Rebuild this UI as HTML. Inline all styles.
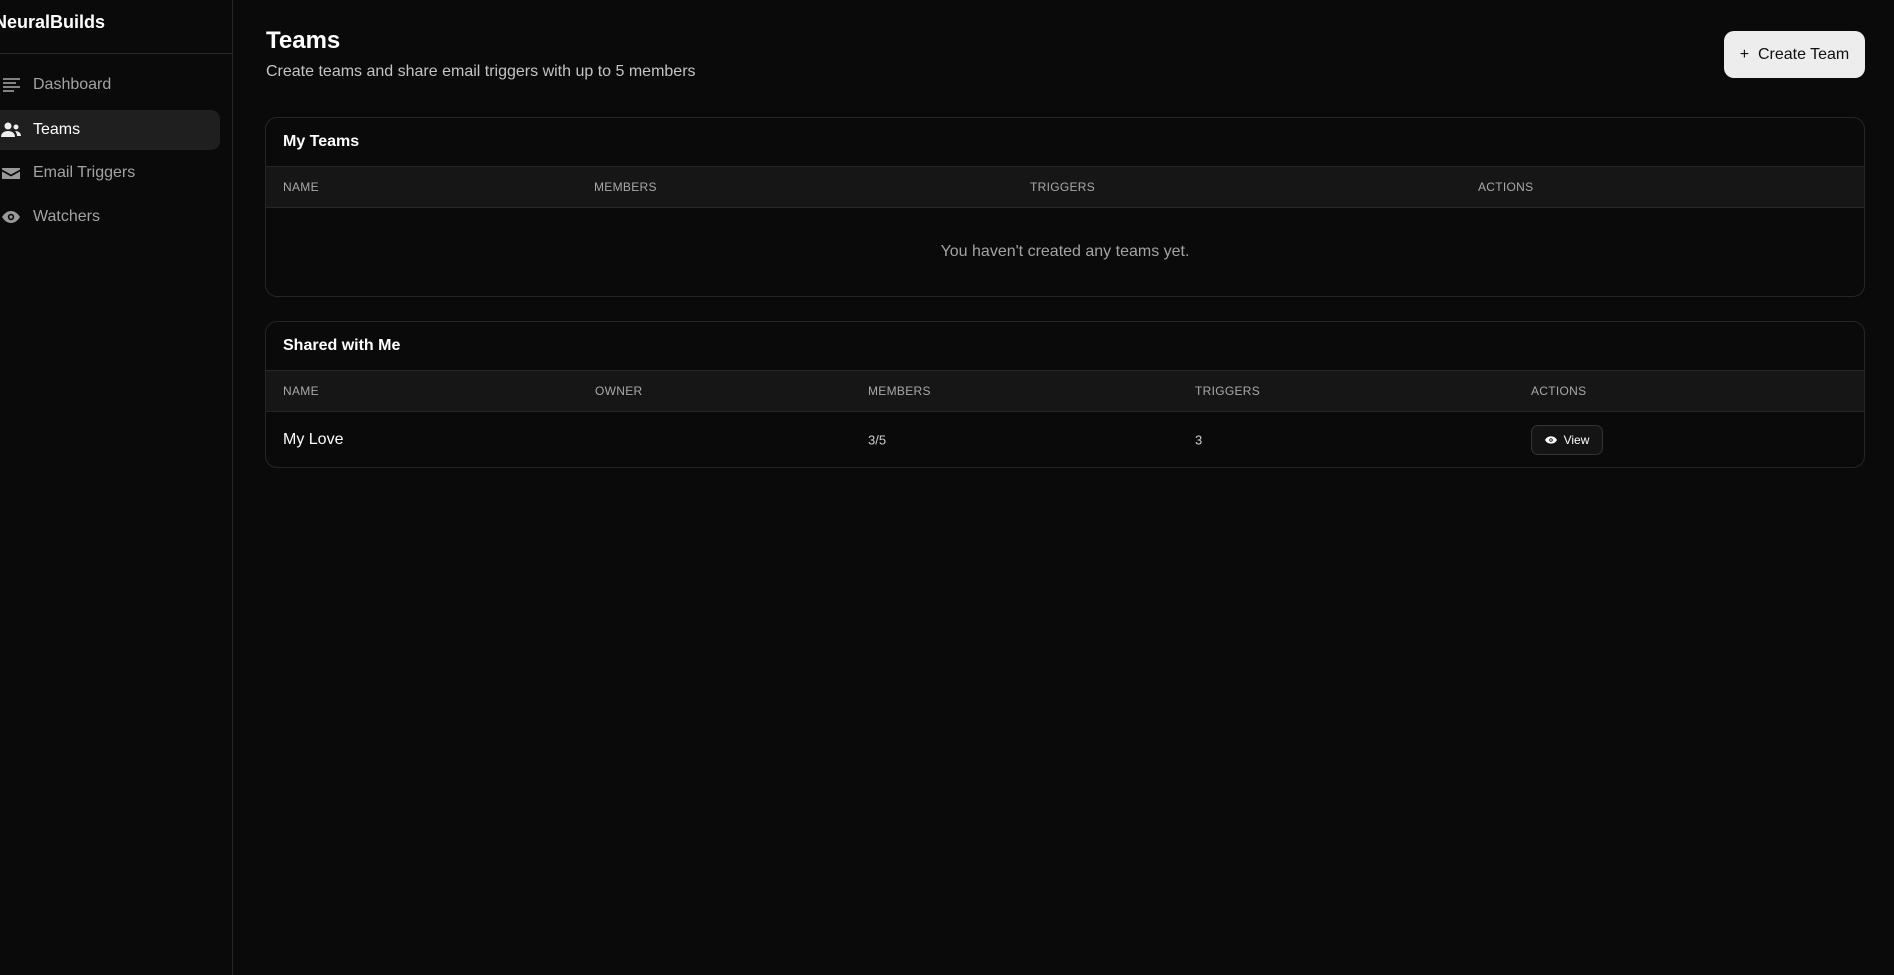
<!DOCTYPE html>
<html><head><meta charset="utf-8"><style>
*{box-sizing:border-box;margin:0;padding:0}
body{width:1894px;height:975px;background:#0a0a0a;font-family:"Liberation Sans",Arial,sans-serif;color:#fff;position:relative;overflow:hidden}
.sb{position:absolute;left:0;top:0;width:233px;height:975px;border-right:1px solid #262626}
.logo{position:absolute;left:-6px;top:12px;font-size:18px;font-weight:bold}
.sdiv{position:absolute;left:0;top:53px;width:232px;height:1px;background:#2a2a2a}
.nav{position:absolute;left:0;width:220px;height:40px;display:flex;align-items:center;font-size:16px;color:#a3a3a3;border-radius:0 9px 9px 0}
.nav svg{position:absolute;left:1px}
.nav span{position:absolute;left:33px}
.nav.act{background:#1f1f1f;color:#fff}
h1{position:absolute;left:266px;top:27px;font-size:24px;font-weight:bold}
.sub{position:absolute;left:266px;top:63px;font-size:16px;color:#c4c4c4}
.btn{position:absolute;left:1724px;top:31px;width:141px;height:47px;background:#ededed;border-radius:10px;color:#111;font-size:16px;display:flex;align-items:center;justify-content:center}
.card{position:absolute;left:265px;width:1600px;border:1px solid #262626;border-radius:12px;overflow:hidden}
.ch{height:49px;padding-left:17px;display:flex;align-items:center;font-size:16px;font-weight:bold;border-bottom:1px solid #262626}
.th{height:41px;background:#161616;border-bottom:1px solid #262626;position:relative;font-size:12px;color:#a8a8a8;letter-spacing:.3px}
.th div,.tr div{position:absolute;top:50%;transform:translateY(-50%)}
.tr{height:55px;position:relative;font-size:13px;color:#ccc}
.view{border:1px solid #333;background:#141414;border-radius:7px;width:72px;height:30px;display:flex;align-items:center;justify-content:center;gap:7px;color:#fff;font-size:12px}
</style></head><body>
<div class="sb">
<div class="logo">NeuralBuilds</div>
<div class="sdiv"></div>
<div class="nav" style="top:65px"><svg width="20" height="18" viewBox="0 0 20 18"><g stroke="#aaa" stroke-width="1.5"><path d="M2 3h17M2 7h13M2 11h17M2 15h11"/></g></svg><span>Dashboard</span></div>
<div class="nav act" style="top:110px"><svg width="20" height="18" viewBox="0 0 20 18" fill="#eee"><circle cx="7" cy="5" r="3.5"/><path d="M0 16c0-4 3-6 7-6s7 2 7 6z"/><circle cx="15" cy="6" r="2.5"/><path d="M14 10c3 0 6 1.5 6 5h-4c0-2-1-4-2-5z"/></svg><span>Teams</span></div>
<div class="nav" style="top:153px"><svg width="20" height="18" viewBox="0 0 20 18" fill="#999"><path d="M1 4h18v1.5l-9 5-9-5z"/><path d="M1 7.5l9 5 9-5V15H1z"/></svg><span>Email Triggers</span></div>
<div class="nav" style="top:197px"><svg width="20" height="18" viewBox="0 0 20 18"><path d="M1 9c2.5-4 5.5-6 9-6s6.5 2 9 6c-2.5 4-5.5 6-9 6s-6.5-2-9-6z" fill="#999"/><circle cx="10" cy="9" r="3.2" fill="#0a0a0a"/><circle cx="10" cy="9" r="1.6" fill="#999"/></svg><span>Watchers</span></div>
</div>
<h1>Teams</h1>
<div class="sub">Create teams and share email triggers with up to 5 members</div>
<div class="btn">+&nbsp;&nbsp;Create Team</div>

<div class="card" style="top:117px;height:180px">
<div class="ch">My Teams</div>
<div class="th"><div style="left:17px">NAME</div><div style="left:328px">MEMBERS</div><div style="left:764px">TRIGGERS</div><div style="left:1212px">ACTIONS</div></div>
<div style="height:88px;display:flex;align-items:center;justify-content:center;font-size:16px;color:#a3a3a3">You haven't created any teams yet.</div>
</div>

<div class="card" style="top:321px;height:147px">
<div class="ch">Shared with Me</div>
<div class="th"><div style="left:17px">NAME</div><div style="left:329px">OWNER</div><div style="left:602px">MEMBERS</div><div style="left:929px">TRIGGERS</div><div style="left:1265px">ACTIONS</div></div>
<div class="tr"><div style="left:17px;font-size:16px;color:#fff">My Love</div><div style="left:602px">3/5</div><div style="left:929px">3</div><div style="left:1265px"><div class="view" style="position:static;transform:none"><svg width="12" height="10" viewBox="0 0 20 14"><path d="M0 7c2.5-4 5.5-6 10-6s7.5 2 10 6c-2.5 4-5.5 6-10 6S2.5 11 0 7z" fill="#fff"/><circle cx="10" cy="7" r="3" fill="#141414"/><circle cx="10" cy="7" r="1.4" fill="#fff"/></svg>View</div></div></div>
</div>
</body></html>
